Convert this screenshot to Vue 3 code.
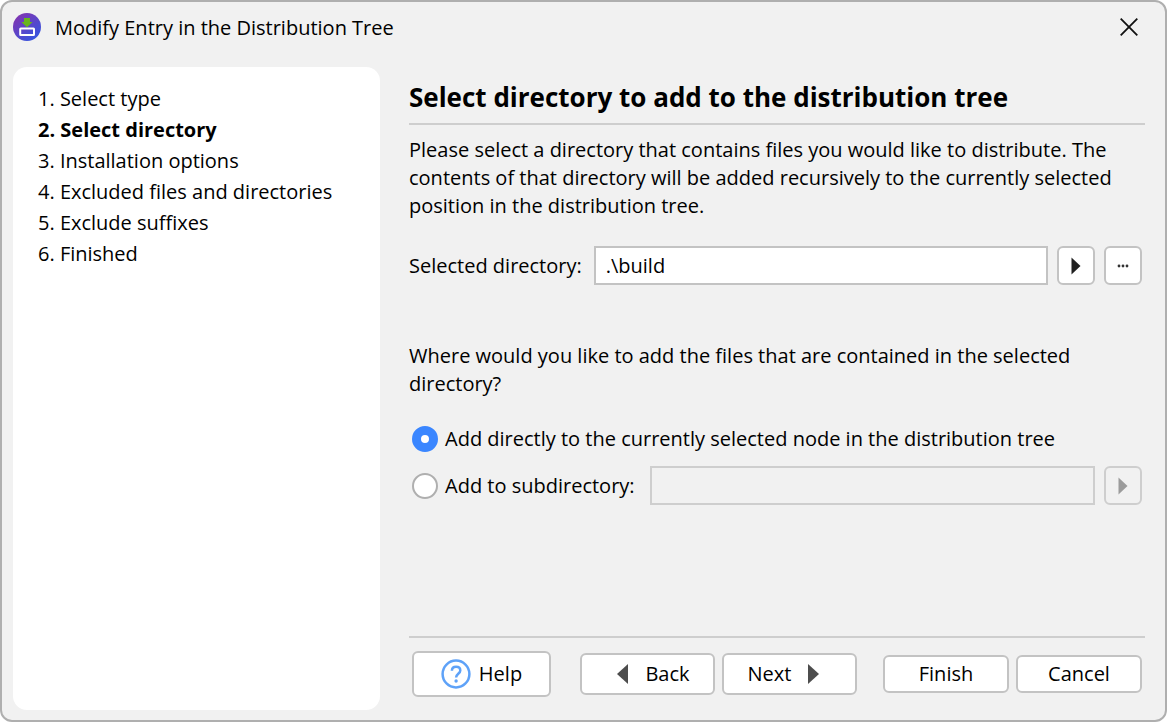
<script setup>
import { ref } from 'vue'

const steps = [
  'Select type',
  'Select directory',
  'Installation options',
  'Excluded files and directories',
  'Exclude suffixes',
  'Finished'
]
const current = 1
const directory = ref('.\\build')
const subdirectory = ref('')
const target = ref('node')
</script>

<template>
  <div class="dialog">
    <header class="titlebar">
      <svg class="logo" viewBox="0 0 28 28" aria-hidden="true">
        <defs>
          <linearGradient id="logo-fill" x1="0.15" y1="0.1" x2="0.8" y2="0.95">
            <stop offset="0" stop-color="#7f35b2" />
            <stop offset="1" stop-color="#3556e0" />
          </linearGradient>
        </defs>
        <circle cx="14" cy="14" r="14" fill="url(#logo-fill)" />
        <path d="M11 5h6v4h2.6L14 14.2 8.4 9H11z" fill="#69b51d" />
        <rect x="7.2" y="15.4" width="13.8" height="6.6" rx="0.5" fill="none" stroke="#fff" stroke-width="2" />
      </svg>
      <span class="title">Modify Entry in the Distribution Tree</span>
      <button class="close" type="button" aria-label="Close">
        <svg viewBox="0 0 18 18" aria-hidden="true">
          <path d="M0.7 0.7 17.3 17.3M17.3 0.7 0.7 17.3" stroke="#111" stroke-width="1.8" />
        </svg>
      </button>
    </header>

    <div class="body">
      <nav class="steps" aria-label="Steps">
        <ol>
          <li v-for="(step, i) in steps" :key="step" :class="{ active: i === current }">{{ i + 1 }}. {{ step }}</li>
        </ol>
      </nav>

      <main class="page">
        <h1>Select directory to add to the distribution tree</h1>
        <p class="intro">
          Please select a directory that contains files you would like to distribute. The contents of that directory
          will be added recursively to the currently selected position in the distribution tree.
        </p>

        <div class="row">
          <label class="dir-label" for="dir">Selected directory:</label>
          <input id="dir" v-model="directory" class="field" type="text" />
          <button class="square" type="button" aria-label="Insert variable">
            <svg class="arrow" viewBox="0 0 10 18" aria-hidden="true"><path d="M0.5 0.5 9.5 9 0.5 17.5z" /></svg>
          </button>
          <button class="square" type="button" aria-label="Browse">
            <svg class="dots" viewBox="0 0 12 4" aria-hidden="true">
              <circle cx="2" cy="2" r="1.4" /><circle cx="6" cy="2" r="1.4" /><circle cx="10" cy="2" r="1.4" />
            </svg>
          </button>
        </div>

        <p class="question">Where would you like to add the files that are contained in the selected directory?</p>

        <div class="row option">
          <input id="to-node" v-model="target" type="radio" name="target" value="node" />
          <label for="to-node">Add directly to the currently selected node in the distribution tree</label>
        </div>
        <div class="row option">
          <input id="to-sub" v-model="target" type="radio" name="target" value="sub" />
          <label class="sub-label" for="to-sub">Add to subdirectory:</label>
          <input
            v-model="subdirectory"
            class="field"
            type="text"
            aria-label="Subdirectory"
            :disabled="target !== 'sub'"
          />
          <button class="square" type="button" aria-label="Insert variable" :disabled="target !== 'sub'">
            <svg class="arrow" viewBox="0 0 10 18" aria-hidden="true"><path d="M0.5 0.5 9.5 9 0.5 17.5z" /></svg>
          </button>
        </div>

        <footer class="actions">
          <button class="btn help" type="button">
            <svg class="help-icon" viewBox="0 0 30 30" aria-hidden="true">
              <circle cx="15" cy="15" r="13.4" fill="none" stroke="#5ea2f8" stroke-width="2.5" />
              <path
                d="M10.9 11.7c0-2.5 1.7-4 4.2-4s4.2 1.5 4.2 3.7c0 3.2-4.2 3.5-4.2 7"
                fill="none"
                stroke="#5ea2f8"
                stroke-width="2.5"
              />
              <circle cx="15.1" cy="22" r="1.7" fill="#5ea2f8" />
            </svg>
            Help
          </button>
          <div class="group">
            <button class="btn step" type="button">
              <svg class="nav-icon" viewBox="0 0 32 20" aria-hidden="true"><path d="M23 0v20L12 10z" /></svg>
              Back
            </button>
            <button class="btn step" type="button">
              Next
              <svg class="nav-icon" viewBox="0 0 32 20" aria-hidden="true"><path d="M9 0v20L20 10z" /></svg>
            </button>
          </div>
          <div class="group end">
            <button class="btn plain" type="button">Finish</button>
            <button class="btn plain" type="button">Cancel</button>
          </div>
        </footer>
      </main>
    </div>
  </div>
</template>

<style>
body {
  background: #fff;
}
</style>

<style scoped>
.dialog,
.dialog * {
  box-sizing: border-box;
}
.dialog {
  display: flex;
  flex-direction: column;
  min-height: 100vh;
  border: 2px solid #afafaf;
  border-radius: 12px;
  background: #f1f1f1;
  color: #000;
  font: 20px/28px 'Open Sans', 'Noto Sans', sans-serif;
}
button,
input {
  font: inherit;
  color: inherit;
}
svg {
  display: block;
  flex: none;
}
.titlebar {
  display: flex;
  align-items: center;
  height: 50px;
  padding: 0 21px 0 11px;
}
.logo {
  width: 28px;
  height: 28px;
}
.title {
  margin-left: 14px;
  padding-top: 2px;
}
.close {
  margin-left: auto;
  padding: 6px;
  border: 0;
  background: none;
}
.close svg {
  width: 18px;
  height: 18px;
}
.body {
  display: flex;
  flex: 1;
  gap: 29px;
  padding: 15px 20px 10px 11px;
}
.steps {
  flex: 0 0 367px;
  padding: 18px 25px;
  border-radius: 14px;
  background: #fff;
}
.steps ol {
  display: grid;
  gap: 3px;
  margin: 0;
  padding: 0;
  list-style: none;
}
.active {
  font-weight: 700;
}
.page {
  display: flex;
  flex: 1;
  flex-direction: column;
  min-width: 0;
  padding: 12px 0 13px;
}
h1 {
  margin: 0;
  padding-bottom: 8px;
  border-bottom: 2px solid #cecece;
  font-size: 26px;
  line-height: 36px;
}
p {
  margin: 0;
}
.intro {
  margin-top: 11px;
  margin-bottom: 26px;
}
.question {
  margin-top: 57px;
  margin-bottom: 21px;
}
.row {
  display: flex;
  align-items: center;
  gap: 7px;
  min-height: 39px;
  padding-right: 3px;
}
.dir-label {
  margin-right: 5px;
}
.field {
  flex: 1;
  min-width: 0;
  height: 39px;
  padding: 0 10px;
  border: 2px solid #c3c3c3;
  background: #fff;
}
.field:disabled {
  border-color: #cecece;
  background: #f1f1f1;
}
.square {
  display: grid;
  place-items: center;
  flex: none;
  width: 38px;
  height: 39px;
  margin: 0 0 0 2px;
  padding: 0;
  border: 2px solid #c3c3c3;
  border-radius: 6px;
  background: #fff;
}
.square:disabled {
  border-color: #cecece;
  background: #f1f1f1;
}
.arrow {
  width: 10px;
  height: 18px;
  fill: #202020;
}
.square:disabled .arrow {
  fill: #9b9b9b;
}
.dots {
  width: 12px;
  height: 4px;
  fill: #333;
}
.option {
  padding-left: 3px;
}
.option + .option {
  margin-top: 8px;
}
.sub-label {
  margin-right: 8px;
}
input[type='radio'] {
  appearance: none;
  flex: none;
  width: 26px;
  height: 26px;
  margin: 0;
  border: 2px solid #afafaf;
  border-radius: 50%;
  background: #fff;
}
input[type='radio']:checked {
  border: 9px solid #3a86ff;
}
.actions {
  display: flex;
  align-items: center;
  gap: 26px;
  margin-top: auto;
  padding: 13px 3px 0;
  border-top: 2px solid #cecece;
}
.group {
  display: flex;
  align-items: center;
  gap: 7px;
}
.end {
  margin-left: auto;
}
.btn {
  display: flex;
  flex: none;
  align-items: center;
  justify-content: center;
  gap: 8px;
  padding: 0;
  border: 2px solid #c3c3c3;
  border-radius: 6px;
  background: #fff;
}
.help {
  width: 139px;
  height: 46px;
  margin-right: 3px;
}
.help-icon {
  width: 30px;
  height: 30px;
}
.step {
  width: 135px;
  height: 42px;
}
.nav-icon {
  width: 32px;
  height: 20px;
  fill: #4d4d4d;
}
.plain {
  width: 126px;
  height: 38px;
}
</style>
